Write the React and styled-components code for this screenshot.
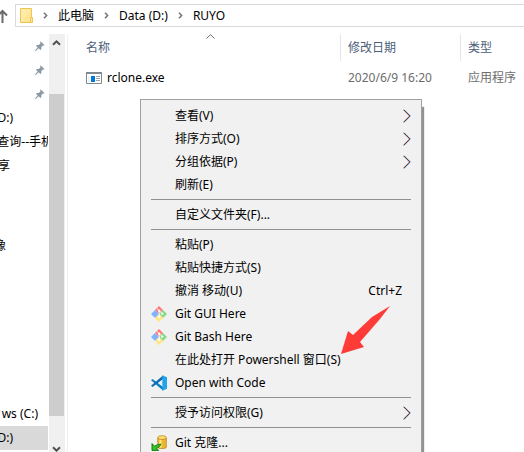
import React from "react";
import styled, { createGlobalStyle } from "styled-components";

const GlobalStyle = createGlobalStyle`
  * { box-sizing: border-box; }
  body {
    margin: 0;
    background: #fff;
    color: #000;
    font: 12px/18px "Noto Sans", "Noto Sans CJK SC", sans-serif;
  }
  button {
    margin: 0;
    padding: 0;
    border: 0;
    background: none;
    color: inherit;
    font: inherit;
    cursor: default;
  }
`;

const Window = styled.div`
  position: relative;
  display: flex;
  flex-direction: column;
  height: 100vh;
  overflow: hidden;
`;

const AddressRow = styled.header`
  display: flex;
  align-items: center;
  padding: 4px 0 7px;
`;

const UpButton = styled.button`
  display: flex;
  flex: none;
  width: 15px;
  height: 16px;
`;

const AddressBar = styled.nav`
  display: flex;
  flex: 1;
  align-items: center;
  height: 23px;
  padding-left: 4px;
  border: 1px solid #d9d9d9;
  border-right: 0;
`;

const CrumbArrow = styled.svg`
  flex: none;
  margin: 0 10px;
`;

const Crumb = styled.a`
  color: #000;
  text-decoration: none;
  white-space: nowrap;
`;

const Body = styled.div`
  display: flex;
  flex: 1;
  min-height: 0;
`;

const NavPane = styled.nav`
  flex: none;
  width: 49px;
  padding-right: 1px;
  overflow: hidden;
`;

const NavRow = styled.a`
  display: flex;
  align-items: center;
  height: 24px;
  margin-top: ${(p) => p.$gap || 0}px;
  overflow: hidden;
  background: ${(p) => (p.$selected ? "#d9d9d9" : "transparent")};
  color: #000;
  text-decoration: none;
`;

const NavLabel = styled.span`
  display: flex;
  flex: none;
  justify-content: flex-end;
  width: ${(p) => p.$end}px;
  white-space: nowrap;
`;

const PinSlot = styled.span`
  display: flex;
  width: 45px;
  justify-content: flex-end;
`;

const Scrollbar = styled.div`
  display: flex;
  flex: none;
  flex-direction: column;
  width: 16px;
  margin-bottom: -6px;
  padding-right: 1px;
  background: #f0f0f0;
`;

const ScrollButton = styled.button`
  display: flex;
  flex: none;
  align-items: center;
  justify-content: center;
  height: 17px;
`;

const Track = styled.div`
  flex: 1;
  padding: 43px 0 25px;
`;

const Thumb = styled.div`
  height: 100%;
  background: #cdcdcd;
`;

const Main = styled.main`
  flex: 1;
  min-width: 0;
  margin-left: 2px;
  padding-left: 11px;
  border-left: 1px solid #f0f0f0;
`;

const FileTable = styled.table`
  width: 100%;
  border-spacing: 0;
  table-layout: fixed;
`;

const Heading = styled.th`
  position: relative;
  width: ${(p) => (p.$width ? `${p.$width}px` : "auto")};
  height: 27px;
  padding: 0 7px;
  border-right: ${(p) => (p.$width ? "1px solid #e5e5e5" : "0")};
  color: #4c607a;
  font-weight: normal;
  text-align: left;
  white-space: nowrap;
`;

const SortMark = styled.svg`
  position: absolute;
  top: 0;
  left: calc(50% - 4px);
`;

const Cell = styled.td`
  height: 34px;
  padding: 0 7px;
  color: #6d6d6d;
  white-space: nowrap;
`;

const FileName = styled.span`
  display: flex;
  align-items: center;
  gap: 5px;
  color: #000;
`;

const Menu = styled.div`
  position: absolute;
  top: 99px;
  left: 140px;
  width: 282px;
  padding: 4px 0;
  border: 1px solid #a0a0a0;
  background: #f1f1f1;
  box-shadow: 3px 7px 1px -1px #929292;
`;

const MenuItem = styled.button`
  display: flex;
  align-items: center;
  width: 100%;
  height: 23px;
  padding: 0 10px;
  text-align: left;
`;

const MenuIcon = styled.span`
  display: flex;
  flex: none;
  width: 24px;
`;

const MenuText = styled.span`
  flex: 1;
  white-space: nowrap;
`;

const Shortcut = styled.span`
  padding-right: 9px;
`;

const Divider = styled.hr`
  height: 1px;
  margin: 3px 10px;
  border: 0;
  background: #919191;
`;

const Pointer = styled.svg`
  position: absolute;
  top: 305px;
  left: 340px;
`;

const UpIcon = () => (
  <svg width="8" height="16" viewBox="0 0 8 16" fill="none" stroke="#6b6b6b" strokeWidth="2">
    <path d="M2.5 15V4M-3 8.5 2.5 3 7 7.5" />
  </svg>
);

const FolderIcon = () => (
  <svg width="13" height="17" viewBox="0 0 13 17">
    <path d="M.5 1.5h11v14H.5z" fill="#ffe596" stroke="#eec64f" />
    <path d="M1 2h10L3 14H1z" fill="#fff0b8" opacity=".5" />
    <path d="M10.5 10.5h2v5h-2z" fill="#ffe9a2" stroke="#eec64f" />
  </svg>
);

const Chevron = () => (
  <CrumbArrow width="5" height="7" viewBox="0 0 5 7" fill="none" stroke="#777" strokeWidth="1.6" aria-hidden="true">
    <path d="m1 .8 2.6 2.7L1 6.2" />
  </CrumbArrow>
);

const PinIcon = () => (
  <svg width="10" height="11" viewBox="0 0 10 11">
    <path d="M5.7.5 9.5 4 8.3 4.8 7.8 4.5 6.3 6.3 6.4 8.1 5.4 9 3.6 7.3.6 10.2 0 9.8 2.6 6.4 1 4.8 1.8 3.9 3.8 4 5.5 2.3 5 1.4z" fill="#8b99a7" />
  </svg>
);

const ScrollArrow = ({ down }) => (
  <svg width="9" height="7" viewBox="0 0 9 7" fill="none" stroke="#505050" strokeWidth="2">
    <path d={down ? "M1 1.2 4.5 4.7 8 1.2" : "M1 5.8 4.5 2.3 8 5.8"} />
  </svg>
);

const ExeIcon = () => (
  <svg width="16" height="12" viewBox="0 0 16 12">
    <path d="M.5.5h15v11H.5z" fill="#fff" stroke="#7f8990" />
    <path d="M0 0h16v2H0z" fill="#7f8990" />
    <path d="M5 4h4v6H5z" fill="#0078d7" />
    <path d="M10 4.5h4M10 6.5h4M10 8.5h4" stroke="#9aa1a8" />
    <path d="M2 4h2v6H2z" fill="#eef0f1" />
  </svg>
);

const GitIcon = () => (
  <svg width="16" height="16" viewBox="0 0 16 16">
    <path d="M8 0 12 4 8 8 4 4z" fill="#ff7878" />
    <path d="M4 4 8 8 4 12 0 8z" fill="#80b3ff" />
    <path d="M12 4 16 8 12 12 8 8z" fill="#87d987" />
    <path d="M8 8 12 12 8 16 4 12z" fill="#ffe680" />
    <path d="M5.8 2.4 10.8 7.2M8.2 5v5.6" fill="none" stroke="#f4f4f4" strokeWidth="1" />
    <circle cx="8.2" cy="4.8" r="1.2" fill="#fff" />
    <circle cx="8.2" cy="11" r="1.2" fill="#fff" />
    <circle cx="11.2" cy="7.6" r="1.2" fill="#fff" />
  </svg>
);

const CodeIcon = () => (
  <svg width="16" height="16" viewBox="0 0 16 16">
    <path d="M0 5.2 1.5 4 12 11.9V15.6z" fill="#087fc7" />
    <path d="M0 10.8 1.5 12 12 4.1V.4z" fill="#0a6db4" />
    <path d="M11.3.3 16 2.2V13.8L11.3 15.7z" fill="#24a3ea" />
  </svg>
);

const CloneIcon = () => (
  <svg width="16" height="16" viewBox="0 0 16 16">
    <path d="M6.8 2.8v9.5c0 1.6 8.5 1.6 8.5 0V2.8z" fill="#edb62c" stroke="#b98427" strokeWidth=".8" />
    <path d="M8.3 4v8.6h2.2V4z" fill="#ffe98c" />
    <ellipse cx="11" cy="2.6" rx="4.3" ry="1.9" fill="#ffdf70" stroke="#bd851d" strokeWidth=".8" />
    <path d="M1 8.6v6.8h6.6l-2.2-2.2c2.1-.5 3.7-1.8 4.5-4.1-2.2.5-4.8.7-6.3 2.2z" fill="#3fc425" stroke="#08700c" strokeWidth=".9" />
  </svg>
);

const SubmenuArrow = () => (
  <svg width="8" height="14" viewBox="0 0 8 14" fill="none" aria-hidden="true">
    <path d="m0 .8 6.2 6.2-6.2 6.2" stroke="#e8b080" strokeWidth=".8" />
    <path d="m1.4 .8 6.2 6.2-6.2 6.2" stroke="#62a0e0" strokeWidth=".8" />
    <path d="m.7 .8 6.2 6.2-6.2 6.2" stroke="#3c2238" strokeWidth=".9" />
  </svg>
);

const crumbs = ["此电脑", "Data (D:)", "RUYO"];

const navItems = [
  { pin: true },
  { pin: true },
  { pin: true },
  { text: "D:)", end: 13 },
  { text: "查询--手机", end: 53 },
  { text: "享", end: 10 },
  { text: "像", end: 6, gap: 56 },
  { text: "ws (C:)", end: 38, gap: 144 },
  { text: "D:)", end: 13, selected: true },
];

const menuGroups = [
  [
    { text: "查看(V)", submenu: true },
    { text: "排序方式(O)", submenu: true },
    { text: "分组依据(P)", submenu: true },
    { text: "刷新(E)" },
  ],
  [{ text: "自定义文件夹(F)..." }],
  [
    { text: "粘贴(P)" },
    { text: "粘贴快捷方式(S)" },
    { text: "撤消 移动(U)", shortcut: "Ctrl+Z" },
    { text: "Git GUI Here", icon: <GitIcon /> },
    { text: "Git Bash Here", icon: <GitIcon /> },
    { text: "在此处打开 Powershell 窗口(S)" },
    { text: "Open with Code", icon: <CodeIcon /> },
  ],
  [{ text: "授予访问权限(G)", submenu: true }],
  [{ text: "Git 克隆...", icon: <CloneIcon /> }],
];

export default function App() {
  return (
    <Window>
      <GlobalStyle />
      <AddressRow>
        <UpButton aria-label="Up"><UpIcon /></UpButton>
        <AddressBar>
          <FolderIcon />
          {crumbs.map((name) => (
            <React.Fragment key={name}>
              <Chevron />
              <Crumb href="#">{name}</Crumb>
            </React.Fragment>
          ))}
        </AddressBar>
      </AddressRow>
      <Body>
        <NavPane>
          {navItems.map((item, i) => (
            <NavRow key={i} href="#" $gap={item.gap} $selected={item.selected}>
              {item.pin ? <PinSlot><PinIcon /></PinSlot> : <NavLabel $end={item.end}>{item.text}</NavLabel>}
            </NavRow>
          ))}
        </NavPane>
        <Scrollbar>
          <ScrollButton aria-label="Scroll up"><ScrollArrow /></ScrollButton>
          <Track><Thumb /></Track>
          <ScrollButton aria-label="Scroll down"><ScrollArrow down /></ScrollButton>
        </Scrollbar>
        <Main>
          <FileTable>
            <thead>
              <tr>
                <Heading $width={262}>
                  名称
                  <SortMark width="9" height="5" viewBox="0 0 9 5" fill="none" stroke="#6d6d6d">
                    <path d="M.5 4.5 4.5 .7 8.5 4.5" />
                  </SortMark>
                </Heading>
                <Heading $width={120}>修改日期</Heading>
                <Heading>类型</Heading>
              </tr>
            </thead>
            <tbody>
              <tr>
                <Cell><FileName><ExeIcon />rclone.exe</FileName></Cell>
                <Cell>2020/6/9 16:20</Cell>
                <Cell>应用程序</Cell>
              </tr>
            </tbody>
          </FileTable>
        </Main>
      </Body>
      <Menu role="menu">
        {menuGroups.map((group, g) => (
          <React.Fragment key={g}>
            {g > 0 && <Divider />}
            {group.map((item) => (
              <MenuItem key={item.text} role="menuitem">
                <MenuIcon>{item.icon}</MenuIcon>
                <MenuText>{item.text}</MenuText>
                {item.shortcut && <Shortcut>{item.shortcut}</Shortcut>}
                {item.submenu && <SubmenuArrow />}
              </MenuItem>
            ))}
          </React.Fragment>
        ))}
      </Menu>
      <Pointer width="52" height="50" viewBox="0 0 52 50" aria-hidden="true">
        <path d="M1 49 8 26 13 30 32 12 50 1 40 14 20 37 24 42z" fill="#ff3b38" />
      </Pointer>
    </Window>
  );
}
